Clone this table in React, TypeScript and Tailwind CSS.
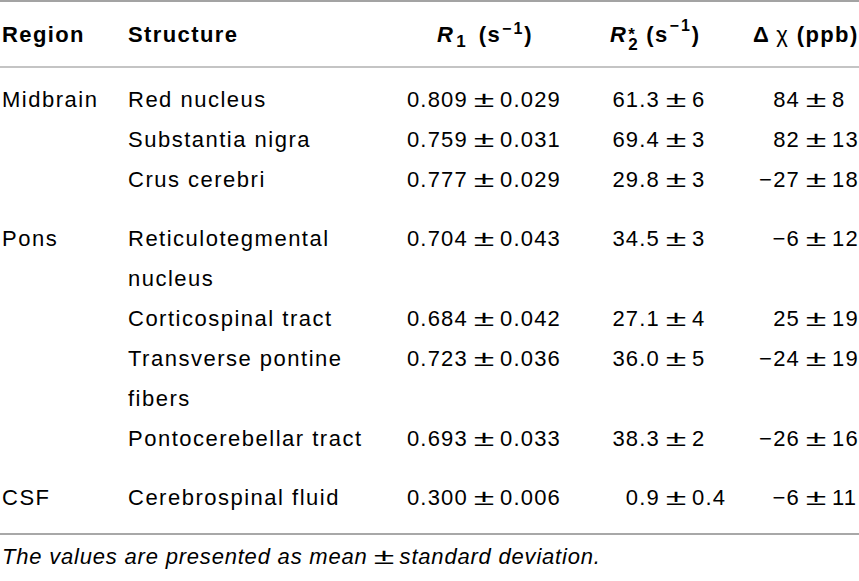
import type { ReactNode } from 'react'

type Row = { structure: string; r1: [string, string]; r2: [string, string]; chi: [string, string] }
type Group = { region: string; rows: Row[] }

const groups: Group[] = [
    {
        region: 'Midbrain',
        rows: [
            { structure: 'Red nucleus', r1: ['0.809', '0.029'], r2: ['61.3', '6'], chi: ['84', '8'] },
            { structure: 'Substantia nigra', r1: ['0.759', '0.031'], r2: ['69.4', '3'], chi: ['82', '13'] },
            { structure: 'Crus cerebri', r1: ['0.777', '0.029'], r2: ['29.8', '3'], chi: ['\u221227', '18'] },
        ],
    },
    {
        region: 'Pons',
        rows: [
            { structure: 'Reticulotegmental nucleus', r1: ['0.704', '0.043'], r2: ['34.5', '3'], chi: ['\u22126', '12'] },
            { structure: 'Corticospinal tract', r1: ['0.684', '0.042'], r2: ['27.1', '4'], chi: ['25', '19'] },
            { structure: 'Transverse pontine fibers', r1: ['0.723', '0.036'], r2: ['36.0', '5'], chi: ['\u221224', '19'] },
            { structure: 'Pontocerebellar tract', r1: ['0.693', '0.033'], r2: ['38.3', '2'], chi: ['\u221226', '16'] },
        ],
    },
    {
        region: 'CSF',
        rows: [
            { structure: 'Cerebrospinal fluid', r1: ['0.300', '0.006'], r2: ['0.9', '0.4'], chi: ['\u22126', '11'] },
        ],
    },
]

function PlusMinus() {
    return (
        <span className="inline-flex w-[32px] justify-center tracking-normal">
            <span className="inline-block scale-x-[1.7]">±</span>
        </span>
    )
}

// value cell, lined up on the ± sign
function Value({ pair, left }: { pair: [string, string]; left: string }) {
    return (
        <div className="flex w-full tracking-[1.2px]">
            <span className={`${left} text-right`}>{pair[0]}</span>
            <PlusMinus />
            <span>{pair[1]}</span>
        </div>
    )
}

function Sup({ children }: { children: ReactNode }) {
    return <span className="relative -top-[8px] text-[16px] tracking-[2px] ml-[1px]">{children}</span>
}

export default function App() {
    return (
        <div className="w-[859px] h-[581px] bg-white text-black font-['Liberation_Sans',Arial,sans-serif] text-[22px] tracking-[1.5px]">
            {/* Header */}
            <div className="flex items-center h-[68px] border-t-2 border-b-2 border-t-[#a3a3a3] border-b-[#c4c4c4] font-bold tracking-[1.4px]">
                <div className="w-[128px] pl-[2px]">Region</div>
                <div className="w-[267px]">Structure</div>
                <div className="w-[195px] pl-[42px] whitespace-nowrap">
                    <span className="italic">R</span>
                    <span className="relative top-[5px] text-[17px] ml-[2px]">1</span>
                    <span className="ml-[4px]"> (s</span>
                    <Sup>−1</Sup>
                    <span>)</span>
                </div>
                <div className="w-[145px] pl-[20px] whitespace-nowrap flex items-center">
                    <span className="italic">R</span>
                    <span className="inline-flex flex-col items-start text-[17px] leading-[15px] mt-[8px] ml-[1px]">
                        <span className="h-[12px] leading-[20px]">*</span>
                        <span>2</span>
                    </span>
                    <span className="ml-[7px]">(s</span>
                    <Sup>−1</Sup>
                    <span>)</span>
                </div>
                <div className="flex-1 pl-[18px] whitespace-nowrap">
                    <span>Δ</span>
                    <span className="font-normal ml-[6px]">χ</span>
                    <span> (ppb)</span>
                </div>
            </div>

            {/* Body */}
            <div className="flex flex-col gap-[19px] pt-[12px] pb-[15px] border-b-2 border-b-[#a8a8a8] leading-[40px]">
                {groups.map((group) => (
                    <div key={group.region} className="flex flex-col">
                        {group.rows.map((row, i) => (
                            <div key={row.structure} className="flex items-start">
                                <div className="w-[128px] pl-[2px]">{i === 0 ? group.region : ''}</div>
                                <div className="w-[267px] pr-[20px]">{row.structure}</div>
                                <div className="w-[195px]">
                                    <Value pair={row.r1} left="w-[73px]" />
                                </div>
                                <div className="w-[145px]">
                                    <Value pair={row.r2} left="w-[70px]" />
                                </div>
                                <div className="flex-1">
                                    <Value pair={row.chi} left="w-[65px]" />
                                </div>
                            </div>
                        ))}
                    </div>
                ))}
            </div>

            {/* Footnote */}
            <p className="mt-[2px] pl-[2px] leading-[40px] italic tracking-[0.8px]">
                The values are presented as mean<PlusMinus />standard deviation.
            </p>
        </div>
    )
}
